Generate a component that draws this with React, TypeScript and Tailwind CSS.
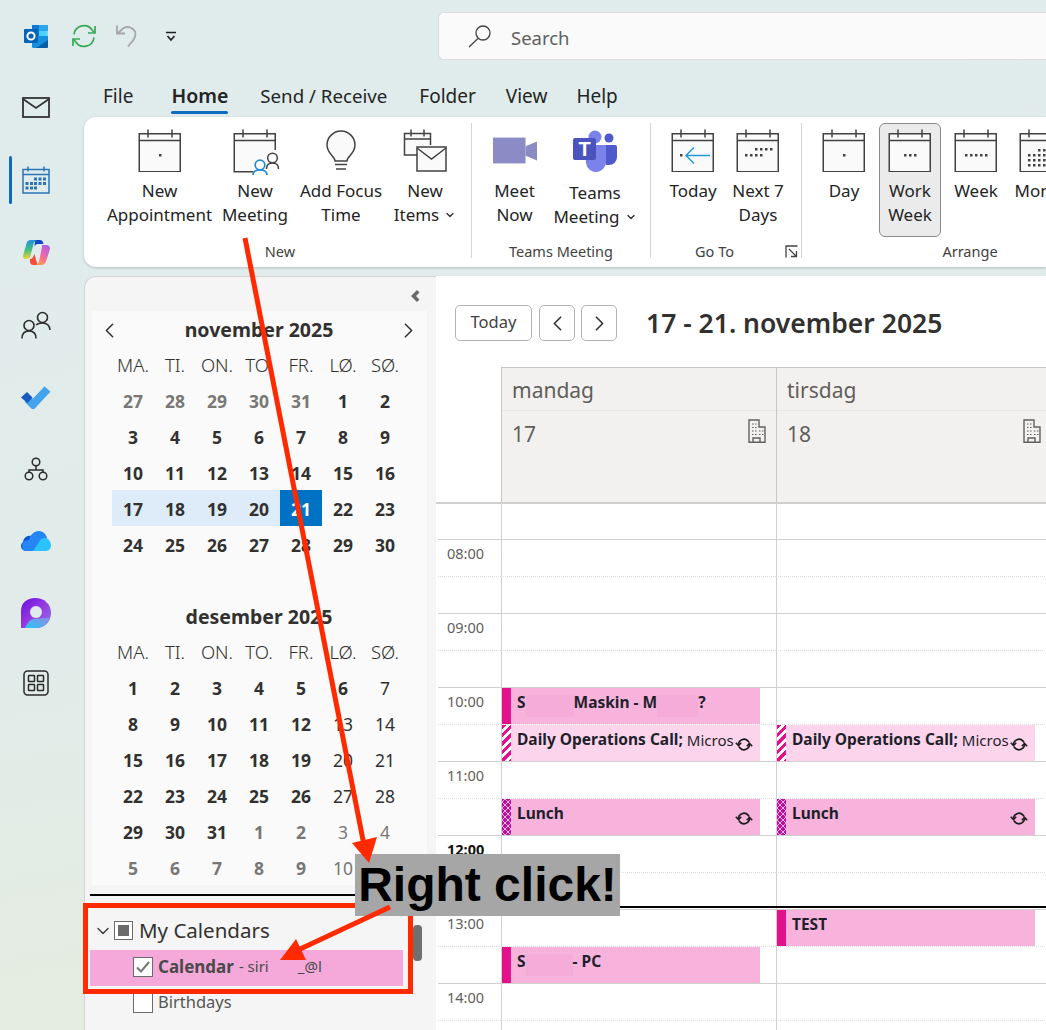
import { ChevronDown, ChevronLeft, ChevronRight } from "lucide-react";
import type { ReactNode } from "react";

const weekdays = ["MA.", "TI.", "ON.", "TO.", "FR.", "LØ.", "SØ."];

// b = bold, g = grey (other month), n = normal
const november: [string, string][] = [
  ["27", "gb"], ["28", "gb"], ["29", "gb"], ["30", "gb"], ["31", "gb"], ["1", "b"], ["2", "b"],
  ["3", "b"], ["4", "b"], ["5", "b"], ["6", "b"], ["7", "b"], ["8", "b"], ["9", "b"],
  ["10", "b"], ["11", "b"], ["12", "b"], ["13", "b"], ["14", "b"], ["15", "b"], ["16", "b"],
  ["17", "w"], ["18", "w"], ["19", "w"], ["20", "w"], ["21", "s"], ["22", "b"], ["23", "b"],
  ["24", "b"], ["25", "b"], ["26", "b"], ["27", "b"], ["28", "b"], ["29", "b"], ["30", "b"],
];

const december: [string, string][] = [
  ["1", "b"], ["2", "b"], ["3", "b"], ["4", "b"], ["5", "b"], ["6", "b"], ["7", "n"],
  ["8", "b"], ["9", "b"], ["10", "b"], ["11", "b"], ["12", "b"], ["13", "n"], ["14", "n"],
  ["15", "b"], ["16", "b"], ["17", "b"], ["18", "b"], ["19", "b"], ["20", "n"], ["21", "n"],
  ["22", "b"], ["23", "b"], ["24", "b"], ["25", "b"], ["26", "b"], ["27", "n"], ["28", "n"],
  ["29", "b"], ["30", "b"], ["31", "b"], ["1", "gb"], ["2", "gb"], ["3", "g"], ["4", "g"],
  ["5", "gb"], ["6", "gb"], ["7", "gb"], ["8", "gb"], ["9", "gb"], ["10", "g"],
];

const dayClass: Record<string, string> = {
  b: "font-bold text-[#323130]",
  n: "text-[#323130]",
  g: "text-[#797775]",
  gb: "font-bold text-[#797775]",
  w: "font-bold text-[#323130] bg-[#deecf9]",
  s: "font-bold text-white bg-[#0072c6]",
};

function MiniMonth({ title, days, nav }: { title: string; days: [string, string][]; nav?: boolean }) {
  return (
    <div className="h-[287px]">
      <div className="flex h-[38px] items-center justify-between pl-[5px] pr-[6px]">
        {nav ? <ChevronLeft size={25} strokeWidth={1.5} className="text-[#323130]" /> : <span />}
        <span className="text-[19.5px] font-bold text-[#323130]">{title}</span>
        {nav ? <ChevronRight size={25} strokeWidth={1.5} className="text-[#323130]" /> : <span />}
      </div>
      <div className="ml-[20px] grid w-[294px] grid-cols-7">
        {weekdays.map((d) => (
          <div key={d} className="flex h-[33px] items-center justify-center pb-[2px] text-[18.5px] font-light text-[#323130]">
            {d}
          </div>
        ))}
        {days.map(([d, kind], i) => (
          <div key={i} className={"flex h-[36px] items-center justify-center pt-[3px] text-[17.5px] " + dayClass[kind]}>
            {d}
          </div>
        ))}
      </div>
    </div>
  );
}

function CalIcon({ children }: { children?: ReactNode }) {
  return (
    <svg width="44" height="44" viewBox="0 0 44 44" fill="none">
      <rect x="1.25" y="5.75" width="41" height="38" fill="#fafafa" stroke="#424242" strokeWidth="1.5" />
      <path d="M1.5 12.5h41M10 1.5v8M34 1.5v8" stroke="#424242" strokeWidth="1.5" />
      {children}
    </svg>
  );
}

function Dots({ points }: { points: [number, number][] }) {
  return (
    <g fill="#424242">
      {points.map(([x, y], i) => (
        <rect key={i} x={x} y={y} width="2.5" height="2.5" />
      ))}
    </g>
  );
}

function RibbonButton({ icon, lines, width, caret, active, labelClass }: { icon: ReactNode; lines: string[]; width: string; caret?: boolean; active?: boolean; labelClass?: string }) {
  return (
    <div className={"flex shrink-0 flex-col items-center " + width}>
      <div className={"flex h-[114px] w-[62px] flex-col items-center pt-[4px] " + (active ? "rounded-[6px] border border-[#8a8a8a] bg-[#ebebeb]" : "border border-transparent")}>
        <div className="flex h-[44px] w-[44px] items-center justify-center">{icon}</div>
        <div className={"flex flex-col items-center whitespace-nowrap text-[17px] leading-[24px] text-[#242424] " + (labelClass ?? "mt-[7px]")}>
          {lines.map((l, i) => (
            <span key={l} className="flex items-center">
              {l}
              {caret && i === lines.length - 1 ? <ChevronDown size={12} strokeWidth={2.4} className="ml-[5px]" /> : null}
            </span>
          ))}
        </div>
      </div>
    </div>
  );
}

function RibbonGroup({ label, className, labelClass, children }: { label: string; className: string; labelClass?: string; children: ReactNode }) {
  return (
    <div className={"flex shrink-0 flex-col border-r border-[#d6d6d6] " + className}>
      <div className="flex h-[116px] items-start">{children}</div>
      <div className={"mt-[4px] text-center text-[14.5px] leading-[20px] text-[#424242] " + (labelClass ?? "")}>{label}</div>
    </div>
  );
}

function RecurIcon() {
  return (
    <svg width="18" height="17" viewBox="0 0 18 17" fill="none" stroke="#1b1b1b" strokeWidth="1.6" className="absolute right-[7px] top-[11px]">
      <path d="M3.5 9a5.5 5.5 0 0 1 9.6-3.9l1 1.4" />
      <path d="M14.5 8a5.5 5.5 0 0 1-9.6 3.9l-1-1.4" />
      <path d="M.8 6.800l2.700 2.700 2.700-2.700M11.800 10.200l2.700-2.700 2.700 2.700" />
    </svg>
  );
}

function CalEvent({ strip, bg, recur, children }: { strip: string; bg: string; recur?: boolean; children: ReactNode }) {
  return (
    <div className={"relative flex h-[36px] w-[258px] " + bg}>
      <div className={"h-full w-[9px] shrink-0 " + strip} />
      <div className="flex h-[30px] min-w-0 items-center overflow-hidden whitespace-nowrap pl-[6px] text-[15.5px] font-bold text-[#1f1f2b]">{children}</div>
      {recur ? <RecurIcon /> : null}
    </div>
  );
}

// the blurred-out parts of a title
function Redacted({ width }: { width: string }) {
  return <span className={"mt-[6px] h-[22px] shrink-0 bg-[#f6acd9] " + width} />;
}

const solidStrip = "bg-[#e3128c]";
const hatchStrip = "bg-[repeating-linear-gradient(135deg,#e3128c_0px,#e3128c_3px,#ffffff_3px,#ffffff_6px)]";
const dotStrip = "bg-[radial-gradient(circle,#b4129e_1.7px,transparent_2.1px),radial-gradient(circle,#b4129e_1.7px,transparent_2.1px)] bg-[length:6px_6px] bg-[position:0_0,3px_3px]";
const pink = "bg-[#f7b3dc]";
const lightPink = "bg-[#fcd5ec]";

const dailyCall = (
  <CalEvent strip={hatchStrip} bg={lightPink} recur>
    Daily Operations Call;<span className="ml-[4px] text-[15px] font-normal">Micros</span>
  </CalEvent>
);

const lunch = (
  <CalEvent strip={dotStrip} bg={pink} recur>
    Lunch
  </CalEvent>
);

type Slot = { label?: string; bold?: boolean; solid?: boolean; mon?: ReactNode; tue?: ReactNode };

const slots: Slot[] = [
  { solid: true },
  { label: "08:00" },
  { solid: true },
  { label: "09:00" },
  { solid: true },
  {
    label: "10:00",
    mon: (
      <CalEvent strip={solidStrip} bg={pink}>
        S<Redacted width="w-[48px]" />Maskin - M<Redacted width="w-[41px]" />?
      </CalEvent>
    ),
  },
  { solid: true, mon: dailyCall, tue: dailyCall },
  { label: "11:00" },
  { solid: true, mon: lunch, tue: lunch },
  { label: "12:00", bold: true },
  { solid: true },
  {
    label: "13:00",
    tue: (
      <CalEvent strip={solidStrip} bg={pink}>
        TEST
      </CalEvent>
    ),
  },
  {
    solid: true,
    mon: (
      <CalEvent strip={solidStrip} bg={pink}>
        S<Redacted width="w-[47px]" />- PC
      </CalEvent>
    ),
  },
  { label: "14:00" },
  { solid: true },
];

function BuildingIcon() {
  return (
    <svg width="18" height="24" viewBox="0 0 18 24" fill="none" stroke="#616161" strokeWidth="1.4">
      <path d="M1 23.3V1h10v7h6v15.3zM5 23v-4h7v4" />
      <path d="M4 5h1.5M7 5h1.5M4 8.5h1.5M7 8.5h1.5M4 12h1.5M7 12h1.5M11 12h1.5M14 12h1.5M4 15.5h1.5M7 15.5h1.5M11 15.5h1.5M14 15.5h1.5" strokeWidth="1.2" />
    </svg>
  );
}

function DayHeader({ name, num }: { name: string; num: string }) {
  return (
    <div className="w-[275px] shrink-0 border-l border-t border-[#c8c6c4] bg-[#f3f1ef]">
      <div className="flex h-[43px] items-center border-b border-[#e8e6e4] pl-[10px] pt-[3px] text-[21px] text-[#605e5c]">{name}</div>
      <div className="flex items-start justify-between pl-[10px] pr-[10px] pt-[8px]">
        <span className="text-[21px] leading-[30px] text-[#605e5c]">{num}</span>
        <BuildingIcon />
      </div>
    </div>
  );
}

function RailItem({ className, children }: { className?: string; children: ReactNode }) {
  return <div className={"relative flex h-[72px] w-[72px] items-center justify-center " + (className ?? "")}>{children}</div>;
}

export default function App() {
  return (
    <div className="relative h-[1030px] w-[1046px] overflow-hidden bg-[linear-gradient(170deg,#e0ecec_0%,#e1ecea_55%,#e7eddc_100%)] font-['Noto_Sans',sans-serif]">
      {/* title bar */}
      <div className="flex h-[71px] items-start">
        <div className="flex w-[438px] shrink-0 items-center pl-[24px] pt-[24px]">
          <svg width="24" height="24" viewBox="0 0 24 24">
            <path d="M8 1h14v11H8z" fill="#0f78d4" />
            <path d="M15 1h9v6h-9z" fill="#28a8ea" />
            <path d="M15 7h9v6h-9z" fill="#50d9ff" opacity=".9" />
            <path d="M8 12l16 0v10.5a1.5 1.5 0 0 1-1.5 1.5H9.5A1.5 1.5 0 0 1 8 22.5z" fill="#1490df" />
            <path d="M12 24l12-8v6.5a1.5 1.5 0 0 1-1.5 1.5z" fill="#0a5ea8" />
            <rect x="0" y="5" width="14" height="14" rx="1" fill="#0364b8" />
            <circle cx="7" cy="12" r="3.6" fill="none" stroke="#fff" strokeWidth="2" />
          </svg>
          <svg width="24" height="24" viewBox="0 0 24 24" fill="none" stroke="#34a853" strokeWidth="1.7" className="ml-[24px]">
            <path d="M2 10.5A10 10 0 0 1 20.5 6.5l2 2" />
            <path d="M22 13.5A10 10 0 0 1 3.5 17.5l-2-2" />
            <path d="M23 2v7h-7M1 22v-7h7" />
          </svg>
          <svg width="24" height="24" viewBox="0 0 24 24" fill="none" stroke="#a6a6a6" strokeWidth="1.8" className="ml-[19px]">
            <path d="M2 1.5v8h8M2.5 9.5L8 4.5c4-3 10-1 12 3 1.5 3.5 0 6-2 9l-5 6" />
          </svg>
          <svg width="12" height="12" viewBox="0 0 12 12" fill="none" stroke="#1f1f1f" strokeWidth="1.6" className="ml-[26px]">
            <path d="M1 2.5h10M2.5 6l3.5 4 3.5-4" />
          </svg>
        </div>
        <div className="mt-[12px] flex h-[48px] flex-1 items-center rounded-l-[6px] border border-r-0 border-[#dcdcdc] bg-[#fafafa] pl-[29px]">
          <svg width="23" height="23" viewBox="0 0 23 23" fill="none" stroke="#424242" strokeWidth="1.3">
            <circle cx="15" cy="8" r="7" />
            <path d="M10 13.5L1 22" />
          </svg>
          <span className="ml-[20px] pt-[3px] text-[18.5px] text-[#616161]">Search</span>
        </div>
      </div>

      <div className="flex">
        {/* left rail */}
        <div className="flex w-[84px] shrink-0 flex-col">
          <RailItem>
            <svg width="28" height="21" viewBox="0 0 28 21" fill="none" stroke="#333" strokeWidth="1.8">
              <rect x="1" y="1" width="26" height="19" />
              <path d="M1 2l13 9 13-9" />
            </svg>
          </RailItem>
          <RailItem className="mt-px">
            <span className="absolute left-[9px] top-[12px] h-[48px] w-[3px] rounded-full bg-[#0f6cbd]" />
            <svg width="28" height="28" viewBox="0 0 28 28" fill="none">
              <rect x="1" y="3.5" width="26" height="23.5" stroke="#2b74b8" strokeWidth="1.5" />
              <path d="M1 8.5h26M6 .5v5M22 .5v5" stroke="#2b74b8" strokeWidth="1.5" />
              <path d="M12 11.5h3v3h-3zM16.5 11.5h3v3h-3zM21 11.5h3v3h-3zM3.5 16h3v3h-3zM8 16h3v3H8zM12 16h3v3h-3zM16.5 16h3v3h-3zM21 16h3v3h-3zM3.5 20.5h3v3h-3zM8 20.5h3v3H8zM12 20.5h3v3h-3z" fill="#2b74b8" />
            </svg>
          </RailItem>
          <RailItem>
            <svg width="27" height="26" viewBox="0 0 27 26">
              <defs>
                <linearGradient id="cpA" x1="0.3" y1="0" x2=".4" y2="1">
                  <stop offset="0" stopColor="#1a8fe3" />
                  <stop offset=".5" stopColor="#3fbf7f" />
                  <stop offset="1" stopColor="#f4d33a" />
                </linearGradient>
                <linearGradient id="cpB" x1=".8" y1="0" x2=".3" y2="1">
                  <stop offset="0" stopColor="#b25ce8" />
                  <stop offset=".55" stopColor="#f06aa6" />
                  <stop offset="1" stopColor="#ff9a4a" />
                </linearGradient>
              </defs>
              <path d="M12 1h5c2 0 3 1.5 3.500 4H15c-2 0-3 1-3.500 3z" fill="#1248c8" />
              <path d="M8 1h6c-2 .5-3 2-3.500 4L7.500 17c-.5 2-2 3-4 3H2.500C.5 20-.3 18 .2 16L3.500 4.500C4 2.500 5.500 1 8 1z" fill="url(#cpA)" />
              <path d="M7 20c2 0 3-1.500 3.500-3l1-2 3 11H10c-2.500 0-3.500-3-3-6z" fill="#f2503c" />
              <path d="M19 6h4.500c2.500 0 4 2 3.300 4.500L23.500 21c-.5 3-3 5-5.500 5h-6c2 0 3.500-1.500 4-3.500L19 8z" fill="url(#cpB)" />
            </svg>
          </RailItem>
          <RailItem className="mt-px">
            <svg width="30" height="28" viewBox="0 0 30 28" fill="none" stroke="#2b2b2b" strokeWidth="1.6">
              <circle cx="8" cy="14.5" r="5" />
              <path d="M1 27.5c0-5 3-7.500 7-7.500s7 2.500 7 7.500" />
              <circle cx="21.5" cy="6.5" r="5" />
              <path d="M15 14c1.500-1.500 4-2 6.500-2 4 0 7 2 7.500 7" />
            </svg>
          </RailItem>
          <RailItem>
            <svg width="30" height="24" viewBox="0 0 30 24" fill="none">
              <path d="M6.5 14L12 19.5L26.5 4" stroke="#43a3ed" strokeWidth="8" />
              <path d="M0 12.5L6 7l5.500 5.500L6.500 18z" fill="#185abd" />
            </svg>
          </RailItem>
          <RailItem>
            <svg width="24" height="24" viewBox="0 0 24 24" fill="none" stroke="#2b2b2b" strokeWidth="1.5">
              <circle cx="12" cy="5" r="3.8" />
              <circle cx="5" cy="19" r="3.8" />
              <circle cx="19" cy="19" r="3.8" />
              <path d="M12 9v4M5 15v-2h14v2" />
            </svg>
          </RailItem>
          <RailItem>
            <svg width="30" height="20" viewBox="0 0 30 20">
              <path d="M10 20H5a5 5 0 0 1-3-9 7 7 0 0 1 9-6z" fill="#0f55c8" />
              <path d="M6 20c-3 0-5-2-5-5 0-4 3-6 7-6 1-5 5-9 10-9 4 0 7 3 8 7l-4 13z" fill="#2586f5" />
              <path d="M12 20l8-12c2-1 3-1 5-1 3 1 5 4 5 7 0 3-2 6-5 6z" fill="#2cc1ff" />
            </svg>
          </RailItem>
          <RailItem>
            <svg width="30" height="30" viewBox="0 0 30 30">
              <defs>
                <linearGradient id="lpA" x1="0" y1="0" x2="1" y2="1">
                  <stop offset="0" stopColor="#6a0fe0" />
                  <stop offset=".55" stopColor="#9a3fe0" />
                  <stop offset="1" stopColor="#7f7de8" />
                </linearGradient>
                <linearGradient id="lpB" x1="0" y1="1" x2="1" y2="0">
                  <stop offset="0" stopColor="#27c8f5" />
                  <stop offset="1" stopColor="#8f8ae8" />
                </linearGradient>
              </defs>
              <path d="M0 30V13C0 5 6 0 14 0c9 0 16 6 16 15s-7 15-15 15z" fill="url(#lpA)" />
              <path d="M4 30c2-4 4-8 8-9 5-1 12-1 17-1-2 6-8 10-14 10z" fill="url(#lpB)" />
              <circle cx="15" cy="14" r="6" fill="#e0ecea" />
            </svg>
          </RailItem>
          <RailItem className="-mt-[2px]">
            <svg width="26" height="26" viewBox="0 0 26 26" fill="none" stroke="#2b2b2b" strokeWidth="1.5">
              <rect x="1" y="1" width="24" height="24" rx="3.5" />
              <rect x="5.5" y="5.5" width="6" height="6" rx=".6" />
              <rect x="14.5" y="5.5" width="6" height="6" rx=".6" />
              <rect x="5.5" y="14.5" width="6" height="6" rx=".6" />
              <rect x="14.5" y="14.5" width="6" height="6" rx=".6" />
            </svg>
          </RailItem>
        </div>

        <div className="min-w-0 flex-1">
          {/* tabs */}
          <div className="flex h-[46px] items-center pl-[19px] pt-[4px] text-[19px] text-[#242424]">
            <span>File</span>
            <span className="relative ml-[38px] text-[19.5px] font-semibold">
              Home
              <span className="absolute -bottom-[3px] left-0 h-[2.5px] w-full rounded-full bg-[#0f6cbd]" />
            </span>
            <span className="ml-[32px] w-[127px] whitespace-nowrap text-[18.7px]">Send / Receive</span>
            <span className="ml-[32px]">Folder</span>
            <span className="ml-[30px]">View</span>
            <span className="ml-[29px]">Help</span>
          </div>

          {/* ribbon */}
          <div className="flex h-[150px] overflow-hidden rounded-l-[12px] bg-white pt-[6px] shadow-[0_1px_3px_rgba(0,0,0,0.2)]">
            <RibbonGroup label="New" className="h-[135px] w-[388px] pl-[22px]" labelClass="pr-[17px]">
              <RibbonButton
                width="w-[107px]"
                lines={["New", "Appointment"]}
                icon={
                  <CalIcon>
                    <Dots points={[[21, 26]]} />
                  </CalIcon>
                }
              />
              <RibbonButton
                width="w-[84px]"
                lines={["New", "Meeting"]}
                icon={
                  <svg width="44" height="44" viewBox="0 0 44 44" fill="none" className="overflow-visible">
                    <path d="M20 43.75H1.25V5.75h41V22" fill="#fafafa" stroke="#424242" strokeWidth="1.5" />
                    <path d="M1.5 12.5h41M10 1.5v8M34 1.5v8" stroke="#424242" strokeWidth="1.5" />
                    <circle cx="27" cy="37" r="4.8" stroke="#1f8ad2" strokeWidth="1.7" fill="#fff" />
                    <path d="M20 47c0-3 2.5-5 7-5s7 2 7 5" stroke="#1f8ad2" strokeWidth="1.7" />
                    <circle cx="39.5" cy="30" r="4.8" stroke="#424242" strokeWidth="1.5" fill="#fff" />
                    <path d="M33.5 41c0-3 1.5-6 6-6s6 3 6 6" stroke="#424242" strokeWidth="1.5" />
                  </svg>
                }
              />
              <RibbonButton
                width="w-[88px]"
                lines={["Add Focus", "Time"]}
                icon={
                  <svg width="30" height="44" viewBox="0 -2 30 44" fill="none" stroke="#424242" strokeWidth="1.5">
                    <path d="M9 31c0-5-8-7-8-16a14 14 0 0 1 28 0c0 9-8 11-8 16z" fill="#fafafa" />
                    <path d="M9 34.5h12M10 39h10" />
                  </svg>
                }
              />
              <RibbonButton
                width="w-[80px]"
                lines={["New", "Items"]}
                caret
                icon={
                  <svg width="44" height="44" viewBox="0 0 44 44" fill="none" stroke="#424242" strokeWidth="1.5">
                    <path d="M14 27H1.5V5.5h26V17M1.5 11h26M8 1.5v7M21 1.5v7" fill="#fafafa" />
                    <rect x="14" y="19" width="29" height="24" fill="#fafafa" />
                    <path d="M14 20l14.5 11L43 20" />
                  </svg>
                }
              />
            </RibbonGroup>

            <RibbonGroup label="Teams Meeting" className="h-[135px] w-[179px] pl-[5px]" labelClass="pr-[5px]">
              <RibbonButton
                width="w-[75px]"
                lines={["Meet", "Now"]}
                icon={
                  <svg width="46" height="27" viewBox="0 0 46 27" fill="#8b8bc6">
                    <rect width="34" height="27" />
                    <path d="M34 9l12-5v20l-12-5z" />
                  </svg>
                }
              />
              <RibbonButton
                width="w-[86px]"
                lines={["Teams", "Meeting"]}
                caret
                labelClass="mt-[9px]"
                icon={
                  <svg width="44" height="44" viewBox="0 0 44 44" className="font-['Liberation_Sans',sans-serif]">
                    <circle cx="36" cy="10" r="4.5" fill="#5059c9" />
                    <path d="M29 17h13a2 2 0 0 1 2 2v10a8 8 0 0 1-8 8h-3z" fill="#5059c9" />
                    <circle cx="22" cy="9" r="6.5" fill="#7b83eb" />
                    <path d="M12 17h21v16a10 10 0 0 1-20 2z" fill="#7b83eb" />
                    <rect y="10" width="23" height="22" rx="2" fill="#4b53bc" />
                    <text x="11.5" y="28" textAnchor="middle" fontSize="20" fontWeight="700" fill="#fff">T</text>
                  </svg>
                }
              />
            </RibbonGroup>

            <RibbonGroup label="Go To" className="relative h-[135px] w-[151px] pl-[10px]" labelClass="pr-[33px]">
              <RibbonButton
                width="w-[64px]"
                lines={["Today"]}
                icon={
                  <CalIcon>
                    <path d="M15 27.500h24M23 19.500l-8 8 8 8" stroke="#1f9ad6" strokeWidth="1.5" />
                    <Dots points={[[9, 26]]} />
                  </CalIcon>
                }
              />
              <RibbonButton
                width="w-[66px]"
                lines={["Next 7", "Days"]}
                icon={
                  <CalIcon>
                    <Dots points={[[19, 20], [24, 20], [29, 20], [34, 20], [9, 26], [14, 26], [19, 26], [24, 26]]} />
                  </CalIcon>
                }
              />
              <svg width="13" height="13" viewBox="0 0 13 13" fill="none" stroke="#424242" strokeWidth="1.3" className="absolute bottom-0 right-[3px]">
                <path d="M12.5 1H1v11.5M4 4l7.5 7.5M11.5 6v5.5H6" />
              </svg>
            </RibbonGroup>

            <RibbonGroup label="Arrange" className="h-[135px] w-[336px] border-r-0 pl-[11px]" labelClass="pr-[11px]">
              <RibbonButton
                width="w-[62px]"
                lines={["Day"]}
                icon={
                  <CalIcon>
                    <Dots points={[[21, 26]]} />
                  </CalIcon>
                }
              />
              <RibbonButton
                width="w-[70px]"
                lines={["Work", "Week"]}
                active
                icon={
                  <CalIcon>
                    <Dots points={[[16, 26], [21, 26], [26, 26]]} />
                  </CalIcon>
                }
              />
              <RibbonButton
                width="w-[62px]"
                lines={["Week"]}
                icon={
                  <CalIcon>
                    <Dots points={[[11, 26], [16, 26], [21, 26], [26, 26], [31, 26]]} />
                  </CalIcon>
                }
              />
              <RibbonButton
                width="w-[68px]"
                lines={["Month"]}
                icon={
                  <CalIcon>
                    <Dots points={[[19, 21], [24, 21], [29, 21], [34, 21], [9, 26], [14, 26], [19, 26], [24, 26], [29, 26], [34, 26], [9, 31], [14, 31], [19, 31], [24, 31], [29, 31], [34, 31], [9, 36], [14, 36], [19, 36], [24, 36]]} />
                  </CalIcon>
                }
              />
            </RibbonGroup>
          </div>

          {/* panes */}
          <div className="mt-[9px] flex h-[754px] overflow-hidden">
            {/* navigation pane */}
            <div className="relative w-[352px] shrink-0 overflow-hidden rounded-tl-[12px] border-l border-t border-[#d4d4d4] bg-[#f5f5f5]">
              <div className="flex h-[34px] items-center justify-end pr-[16px] pt-[4px]">
                <svg width="10" height="12" viewBox="0 0 10 12" fill="#6b6b6b">
                  <path d="M7 0l2.5 2.5L6 6l3.5 3.5L7 12 1 6z" />
                </svg>
              </div>
              <div className="ml-[7px] h-[574px] w-[335px] overflow-hidden bg-[#fafafa]">
                <MiniMonth title="november 2025" days={november} nav />
                <MiniMonth title="desember 2025" days={december} />
              </div>
              <div className="ml-[5px] mt-[9px] h-[1.5px] w-[340px] bg-black" />
              <div className="mt-[17px] flex h-[37px] items-center pb-[1px] pl-[8px]">
                <ChevronDown size={20} strokeWidth={1.8} className="text-[#424242]" />
                <span className="ml-[1px] flex h-[19px] w-[19px] items-center justify-center border border-[#6b6b6b] bg-white">
                  <span className="h-[11px] w-[11px] bg-[#6b6b6b]" />
                </span>
                <span className="ml-[6px] text-[20.5px] text-[#323130]">My Calendars</span>
              </div>
              <div className="ml-[5px] flex h-[36px] w-[313px] items-center bg-[#f5a8da] pb-[2px] pl-[43px]">
                <span className="flex h-[20px] w-[20px] items-center justify-center border border-[#6b6b6b] bg-white">
                  <svg width="14" height="12" viewBox="0 0 14 12" fill="none" stroke="#777" strokeWidth="2">
                    <path d="M1 6.5l4 4L13 1" />
                  </svg>
                </span>
                <span className="ml-[5px] text-[17px] font-bold text-[#4a4a4a]">Calendar</span>
                <span className="ml-[5px] text-[15px] text-[#4a4a4a]">- siri</span>
                <span className="ml-[29px] text-[15px] text-[#4a4a4a]">_@l</span>
              </div>
              <div className="ml-[48px] flex h-[36px] items-center pb-[2px]">
                <span className="h-[20px] w-[20px] border border-[#6b6b6b] bg-white" />
                <span className="ml-[5px] text-[16.5px] text-[#555]">Birthdays</span>
              </div>
              <div className="ml-[48px] mt-[8px] h-[20px] w-[20px] border border-[#6b6b6b] bg-white" />
              <div className="absolute left-[328px] top-[648px] h-[36px] w-[9px] rounded-[4px] bg-[#707070]" />
            </div>

            {/* calendar pane */}
            <div className="min-w-0 flex-1 bg-white">
              <div className="flex h-[91px] items-start pl-[19px] pt-[29px]">
                <div className="flex h-[36px] w-[77px] items-center justify-center rounded-[5px] border border-[#b3b3b3] pb-[2px] text-[16.5px] text-[#424242]">Today</div>
                <div className="ml-[7px] flex h-[36px] w-[36px] items-center justify-center rounded-[5px] border border-[#b3b3b3]">
                  <ChevronLeft size={25} strokeWidth={1.6} className="text-[#323130]" />
                </div>
                <div className="ml-[6px] flex h-[36px] w-[36px] items-center justify-center rounded-[5px] border border-[#b3b3b3]">
                  <ChevronRight size={25} strokeWidth={1.6} className="text-[#323130]" />
                </div>
                <div className="ml-[29px] whitespace-nowrap text-[26.5px] font-semibold leading-[36px] text-[#323130]">17 - 21. november 2025</div>
              </div>
              <div className="flex h-[137px] border-b-2 border-[#d2d0ce]">
                <div className="w-[65px] shrink-0" />
                <DayHeader name="mandag" num="17" />
                <DayHeader name="tirsdag" num="18" />
              </div>
              <div className="relative">
                {slots.map((s, i) => (
                  <div key={i} className={"flex " + (i === 0 ? "h-[36px]" : "h-[37px]")}>
                    <div className={"ml-[2px] w-[63px] shrink-0 border-b pl-[9px] pt-[3px] text-[14.5px] leading-[20px] " + (s.solid ? "border-[#d2d0ce] " : "border-dotted border-[#dedede] ") + (s.bold ? "font-bold text-[#111]" : "text-[#605e5c]")}>
                      {s.label}
                    </div>
                    <div className={"w-[275px] shrink-0 border-b border-l border-l-[#d2d0ce] " + (s.solid ? "border-b-[#d2d0ce]" : "border-b-[#dedede] [border-bottom-style:dotted]")}>{s.mon}</div>
                    <div className={"w-[275px] shrink-0 border-b border-l border-l-[#d2d0ce] " + (s.solid ? "border-b-[#d2d0ce]" : "border-b-[#dedede] [border-bottom-style:dotted]")}>{s.tue}</div>
                  </div>
                ))}
                <div className="absolute left-[65px] right-0 top-[402px] h-[2px] bg-black" />
              </div>
            </div>
          </div>
        </div>
      </div>

      {/* annotations drawn over the screenshot */}
      <div className="absolute left-[83px] top-[903px] h-[91px] w-[330px] border-[5px] border-[#ff2a00]" />
      <div className="absolute left-[355px] top-[854px] flex h-[62px] w-[265px] items-center justify-center bg-[#a6a6a6] font-['Liberation_Sans',sans-serif] text-[48px] font-bold leading-none text-black">
        Right click!
      </div>
      <svg width="1046" height="1030" viewBox="0 0 1046 1030" className="pointer-events-none absolute left-0 top-0">
        <path d="M245 238L364 845" stroke="#ff2a00" strokeWidth="5" fill="none" />
        <path d="M352 843L377 837L369 863Z" fill="#ff2a00" />
        <path d="M390 907L298 950" stroke="#ff2a00" strokeWidth="5" fill="none" />
        <path d="M296 939L280 960L306 960Z" fill="#ff2a00" />
      </svg>
    </div>
  );
}
